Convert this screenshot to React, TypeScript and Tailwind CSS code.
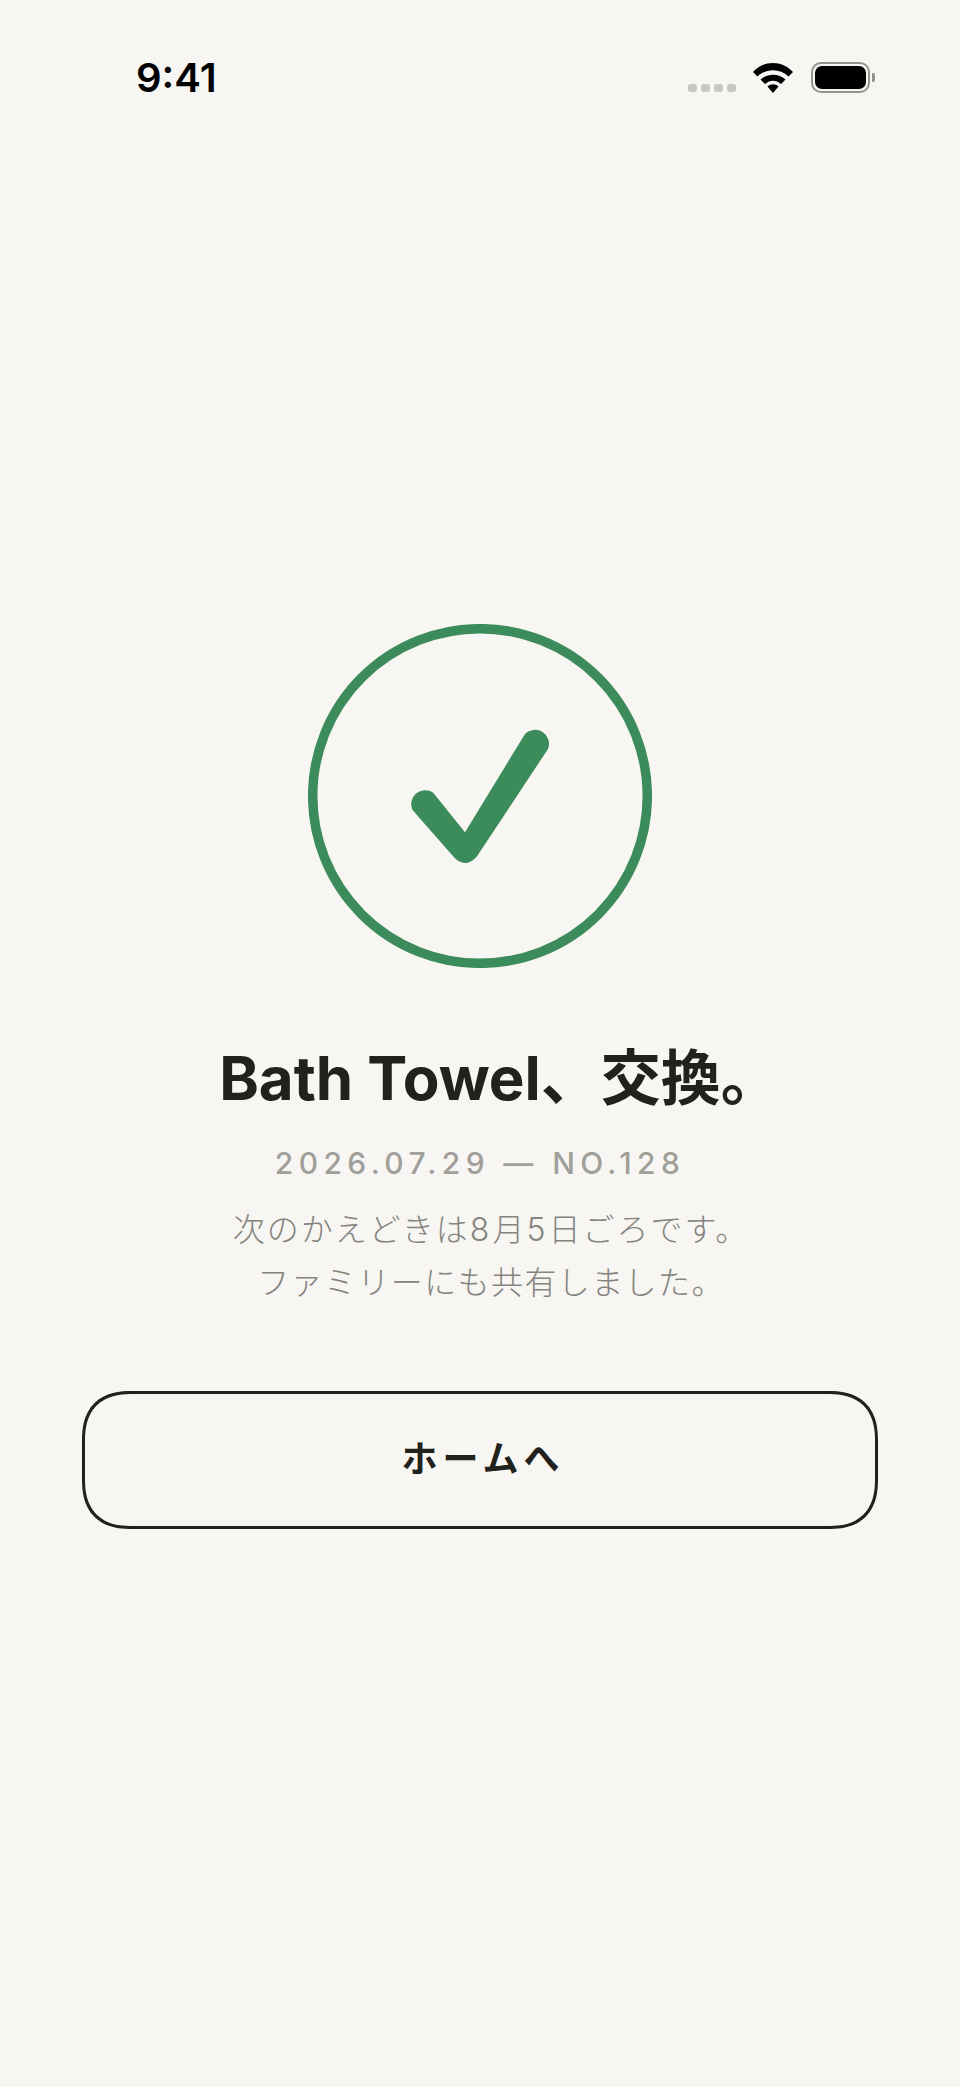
const GREEN = '#3b8b5b';

function StatusBar() {
  return (
    <div className="flex h-[154px] items-start justify-between pl-[136px] pr-[85px] pt-[53px]">
      <span className="font-['Inter',sans-serif] text-[40px] font-semibold leading-[50px] text-black">9:41</span>
      <div className="flex items-start pt-[9px]">
        <div className="mr-[17px] mt-[22px] flex gap-[4px]">
          {[0, 1, 2, 3].map((i) => (
            <span key={i} className="h-[8px] w-[9px] rounded-[3px] bg-[#c7c6c2]" />
          ))}
        </div>
        <svg width="40" height="30" viewBox="0 0 40 30" className="mr-[18px] mt-[1px]">
          <path d="M0 9C11 -3 29 -3 40 9L35.500 13.500C27 5 13 5 4.500 13.500Z" fill="#000" />
          <path d="M7.500 16.500C14 10 26 10 32.500 16.500L28 21C23 16.500 17 16.500 12 21Z" fill="#000" />
          <path d="M14.500 23.500C17.500 20.500 22.500 20.500 25.500 23.500L20 30Z" fill="#000" />
        </svg>
        <div className="flex items-center">
          <div className="flex h-[31px] w-[59px] items-center justify-center rounded-[10px] border-[2.5px] border-[#94938f] p-[2px]">
            <div className="h-full w-full rounded-[7px] bg-black" />
          </div>
          <div className="ml-[2px] h-[9px] w-[3px] rounded-r-[2px] bg-[#94938f]" />
        </div>
      </div>
    </div>
  );
}

function CheckCircle() {
  return (
    <svg width="344" height="344" viewBox="0 0 344 344">
      <circle cx="172" cy="172" r="167.300" fill="none" stroke={GREEN} strokeWidth="9.500" />
      <path
        d="M104.500 186L146 233.300Q157 245 168.700 232.700L240 125A14 14 0 0 0 217 110L157 208.300L125 168.500A14 14 0 0 0 104.500 186Z"
        fill={GREEN}
      />
    </svg>
  );
}

export default function App() {
  return (
    <div className="h-[2087px] w-[960px] overflow-hidden bg-[#f7f6f2]">
      <StatusBar />
      <main className="flex flex-col items-center pt-[470px]">
        <CheckCircle />
        <h1 className="mt-[74px] pl-[40px] font-['Inter','Noto_Sans_CJK_JP',sans-serif] text-[60px] font-bold leading-[72px] text-[#23211c]">
          Bath Towel、交換。
        </h1>
        <p className="mt-[29px] font-['Inter',sans-serif] text-[30px] font-medium leading-[40px] tracking-[5.400px] text-[#a09f9a]">
          2026.07.29 — NO.128
        </p>
        <div className="mt-[19px] pl-[22px] text-center font-['Noto_Sans_CJK_JP',sans-serif] text-[32px] font-light leading-[51px] text-[#85847f]">
          <p className="tracking-[2px]">
            次のかえどきは<span className="font-['Inter',sans-serif] tracking-[3px]">8</span>月<span className="font-['Inter',sans-serif] tracking-[3px]">5</span>日ごろです。
          </p>
          <p className="tracking-[1.400px]">ファミリーにも共有しました。</p>
        </div>
        <button className="mt-[85px] flex h-[138px] w-[796px] items-center justify-center rounded-[50px] border-[3px] border-[#23211c] pb-[8px] pl-[6px] font-['Noto_Sans_CJK_JP',sans-serif] text-[36px] font-bold tracking-[5px] text-[#23211c] [corner-shape:superellipse(1.3)]">
          ホームへ
        </button>
      </main>
    </div>
  );
}
